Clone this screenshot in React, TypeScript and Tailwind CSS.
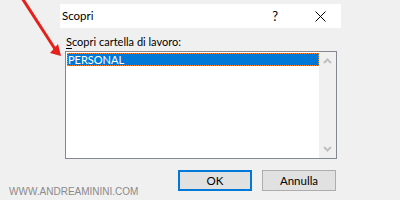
export default function App() {
  return (
    <div
      className="relative w-[400px] h-[200px] overflow-hidden bg-[#f0f0f0] text-[11px] text-black"
      style={{ fontFamily: 'Lato, "Liberation Sans", sans-serif' }}
    >
      {/* title bar */}
      <div className="ml-[60px] mt-[4px] w-[281px] h-[24px] bg-white flex items-center">
        <span className="ml-[2px] text-[11.5px] leading-none">Scopri</span>
        <span className="ml-auto text-[13px] leading-none">?</span>
        <svg className="ml-[37px] mr-[15px]" width="11" height="11" viewBox="0 0 11 11">
          <path d="M0.5 0.5 L10.5 10.5 M10.5 0.5 L0.5 10.5" stroke="#000" strokeWidth="1" />
        </svg>
      </div>

      <div className="ml-[66px] mt-[6px] leading-[16px] text-[11px]">
        <span className="underline underline-offset-2">S</span>copri cartella di lavoro:
      </div>

      {/* list box */}
      <div className="ml-[65px] mt-[1px] w-[272px] h-[108px] border border-[#828790] bg-white flex">
        <div className="flex-1 pl-[1px] pt-[1px]">
          <div className="h-[13px] bg-[#0078d7] outline-1 outline-dotted outline-[#ff8728] -outline-offset-1 text-white text-[11px] leading-[13px] pl-[1px]">
            PERSONAL
          </div>
        </div>
        <div className="w-[17px] bg-[#f0f0f0] flex flex-col items-center justify-between py-[6px]">
          <svg width="9" height="6" viewBox="0 0 9 6">
            <path d="M1 5 L4.5 1.5 L8 5" stroke="#c0c0c0" strokeWidth="2" fill="none" />
          </svg>
          <svg width="9" height="6" viewBox="0 0 9 6">
            <path d="M1 1 L4.5 4.5 L8 1" stroke="#c0c0c0" strokeWidth="2" fill="none" />
          </svg>
        </div>
      </div>

      {/* buttons */}
      <div className="ml-[178px] mt-[11px] flex gap-[10px] text-[11.5px]">
        <button className="w-[74px] h-[21px] border-2 border-[#0078d7] bg-[#e1e1e1] leading-none">
          OK
        </button>
        <button className="w-[74px] h-[21px] border border-[#adadad] bg-[#e1e1e1] leading-none">
          Annulla
        </button>
      </div>

      <div
        className="absolute left-[9px] top-[184px] text-[10px] text-[#8a8a8a]"
        style={{ fontFamily: '"Liberation Sans", sans-serif' }}
      >
        WWW.ANDREAMININI.COM
      </div>

      {/* red arrow */}
      <svg className="absolute left-0 top-0" width="70" height="65" viewBox="0 0 70 65">
        <path d="M22 -2 L55 49" stroke="#e5211b" strokeWidth="3" fill="none" />
        <path d="M50 53 L61 56 L58 44 Z" fill="#e5211b" />
      </svg>
    </div>
  );
}
